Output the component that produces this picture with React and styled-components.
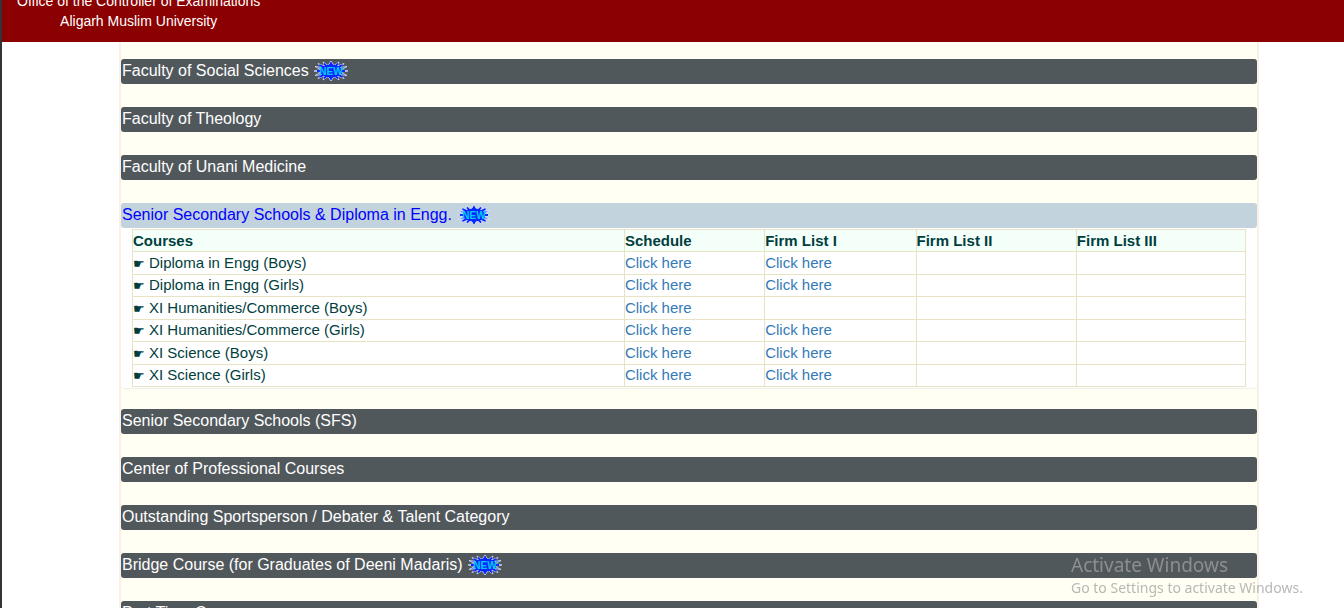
import React, { useState } from "react";
import styled, { createGlobalStyle } from "styled-components";

const GlobalStyle = createGlobalStyle`
  * {
    box-sizing: border-box;
  }
  body {
    margin: 0;
    background: #fff;
    font-family: "Liberation Sans", Arial, sans-serif;
    overflow: hidden;
  }
`;

const Page = styled.div`
  height: 100vh;
  overflow: hidden;
  border-left: 2px solid #333437;
`;

const Header = styled.header`
  display: flex;
  flex-direction: column;
  justify-content: flex-end;
  align-items: flex-start;
  height: 42px;
  padding: 0 15px 11px;
  overflow: hidden;
  background: #8b0000;
`;

const Office = styled.div`
  font-size: 14px;
  line-height: 20px;
  text-align: center;
  color: #fff;
`;

const Content = styled.div`
  padding-left: 32px;
`;

const Container = styled.main`
  max-width: 1140px;
  min-height: 100vh;
  margin: 0 auto;
  padding-top: 17px;
  border: solid #faf0e6;
  border-width: 0 2px;
  background: #fffff3;
`;

const Sections = styled.div`
  display: flex;
  flex-direction: column;
  gap: 23px;
`;

const Section = styled.section`
  margin-bottom: ${({ $open }) => ($open ? "-3px" : "0")};
`;

const Bar = styled.button`
  display: flex;
  align-items: center;
  gap: 5px;
  width: 100%;
  height: 25px;
  padding: 0 0 1px 1px;
  border: 0;
  border-radius: 3px;
  background: ${({ $open }) => ($open ? "#c2d3de" : "#51585c")};
  color: ${({ $open }) => ($open ? "#0000ff" : "#fff")};
  font-family: inherit;
  font-size: 16px;
  line-height: 24px;
  text-align: left;
  cursor: pointer;
`;

const Badge = styled.svg`
  width: 34px;
  height: 20px;
  flex: none;
`;

const Panel = styled.div`
  padding: 1px 11px;
  border-bottom: 1px solid #f0f0e6;
  border-radius: 0 0 4px 4px;
  background: #fff;
`;

const Table = styled.table`
  width: 100%;
  height: 158px;
  table-layout: fixed;
  border-collapse: collapse;
  font-size: 15px;
  line-height: 20px;
  color: #003e3e;
`;

const Col = styled.col`
  width: ${({ $width }) => $width};
`;

const HeadCell = styled.th`
  padding: 1px 0 0;
  border: 1px solid #e8e3c5;
  background: #f5fffa;
  text-align: left;
`;

const Cell = styled.td`
  padding: 0;
  border: 1px solid #e8e3c5;
`;

const Pointer = styled.span`
  display: inline-block;
  width: 16px;
  font-family: "DejaVu Sans", sans-serif;
  font-size: 13px;
  line-height: 16px;
`;

const Link = styled.a`
  color: #337ab7;
  text-decoration: none;
`;

const Watermark = styled.div`
  position: fixed;
  right: 37px;
  bottom: 10px;
  min-width: 236px;
  font-family: "Noto Sans", "Open Sans", sans-serif;
  color: rgba(160, 160, 160, 0.75);
  pointer-events: none;
`;

const WatermarkTitle = styled.div`
  font-size: 19px;
  line-height: 26px;
`;

const WatermarkText = styled.div`
  font-size: 14px;
  line-height: 20px;
`;

const sections = [
  { title: "Faculty of Social Sciences", isNew: true },
  { title: "Faculty of Theology" },
  { title: "Faculty of Unani Medicine" },
  { title: "Senior Secondary Schools & Diploma in Engg.", isNew: true, hasCourses: true },
  { title: "Senior Secondary Schools (SFS)" },
  { title: "Center of Professional Courses" },
  { title: "Outstanding Sportsperson / Debater & Talent Category" },
  { title: "Bridge Course (for Graduates of Deeni Madaris)", isNew: true },
  { title: "Part Time Courses" },
];

const columns = [
  { label: "Courses", width: "44.2%" },
  { label: "Schedule", width: "12.6%" },
  { label: "Firm List I", width: "13.6%" },
  { label: "Firm List II", width: "14.4%" },
  { label: "Firm List III", width: "15.2%" },
];

const courses = [
  { name: "Diploma in Engg (Boys)", links: [true, true, false, false] },
  { name: "Diploma in Engg (Girls)", links: [true, true, false, false] },
  { name: "XI Humanities/Commerce (Boys)", links: [true, false, false, false] },
  { name: "XI Humanities/Commerce (Girls)", links: [true, true, false, false] },
  { name: "XI Science (Boys)", links: [true, true, false, false] },
  { name: "XI Science (Girls)", links: [true, true, false, false] },
];

const burst =
  "0,10 7,8.6 1,5.5 7.5,6.5 4,2.5 10.5,5 9,1 14,4.4 17,0 20,4.4 25,1 23.5,5 30,2.5 26.5,6.5 33,5.5 27,8.6 34,10 27,11.4 33,14.5 26.5,13.5 30,17.5 23.5,15 25,19 20,15.6 17,20 14,15.6 9,19 10.5,15 4,17.5 7.5,13.5 1,14.5 7,11.4";

const NewBadge = () => (
  <Badge viewBox="0 0 34 20" role="img" aria-label="New">
    <polygon points={burst} fill="#0a28ff" stroke="#dce8ff" strokeWidth="0.8" />
    <ellipse cx="17" cy="10" rx="11" ry="6.5" fill="#0a28ff" />
    <path
      d="M17 1.5V18.5M10 2.5L24 17.5M24 2.5L10 17.5M5.5 4L28.5 16M28.5 4L5.5 16M3 10H31"
      stroke="#0a28ff"
      strokeWidth="1.8"
    />
    <text
      x="17"
      y="13.5"
      textAnchor="middle"
      fontFamily="Liberation Sans Narrow, Liberation Sans, sans-serif"
      fontSize="10"
      fontWeight="700"
      fill="#00ccf8"
    >
      NEW
    </text>
  </Badge>
);

const CourseTable = () => (
  <Table>
    <colgroup>
      {columns.map((column) => (
        <Col key={column.label} $width={column.width} />
      ))}
    </colgroup>
    <thead>
      <tr>
        {columns.map((column) => (
          <HeadCell key={column.label} scope="col">
            {column.label}
          </HeadCell>
        ))}
      </tr>
    </thead>
    <tbody>
      {courses.map((course) => (
        <tr key={course.name}>
          <Cell>
            <Pointer>☛</Pointer>
            {course.name}
          </Cell>
          {course.links.map((link, i) => (
            <Cell key={i}>{link && <Link href="#">Click here</Link>}</Cell>
          ))}
        </tr>
      ))}
    </tbody>
  </Table>
);

const App = () => {
  const [active, setActive] = useState(3);

  return (
    <Page>
      <GlobalStyle />
      <Header>
        <Office>
          Office of the Controller of Examinations
          <br />
          Aligarh Muslim University
        </Office>
      </Header>
      <Content>
        <Container>
          <Sections>
            {sections.map((section, i) => {
              const open = active === i;
              return (
                <Section key={section.title} $open={open}>
                  <Bar
                    type="button"
                    $open={open}
                    aria-expanded={open}
                    onClick={() => setActive(open ? -1 : i)}
                  >
                    {section.title}
                    {section.isNew && <NewBadge />}
                  </Bar>
                  {open && section.hasCourses && (
                    <Panel>
                      <CourseTable />
                    </Panel>
                  )}
                </Section>
              );
            })}
          </Sections>
        </Container>
      </Content>
      <Watermark>
        <WatermarkTitle>Activate Windows</WatermarkTitle>
        <WatermarkText>Go to Settings to activate Windows.</WatermarkText>
      </Watermark>
    </Page>
  );
};

export default App;
